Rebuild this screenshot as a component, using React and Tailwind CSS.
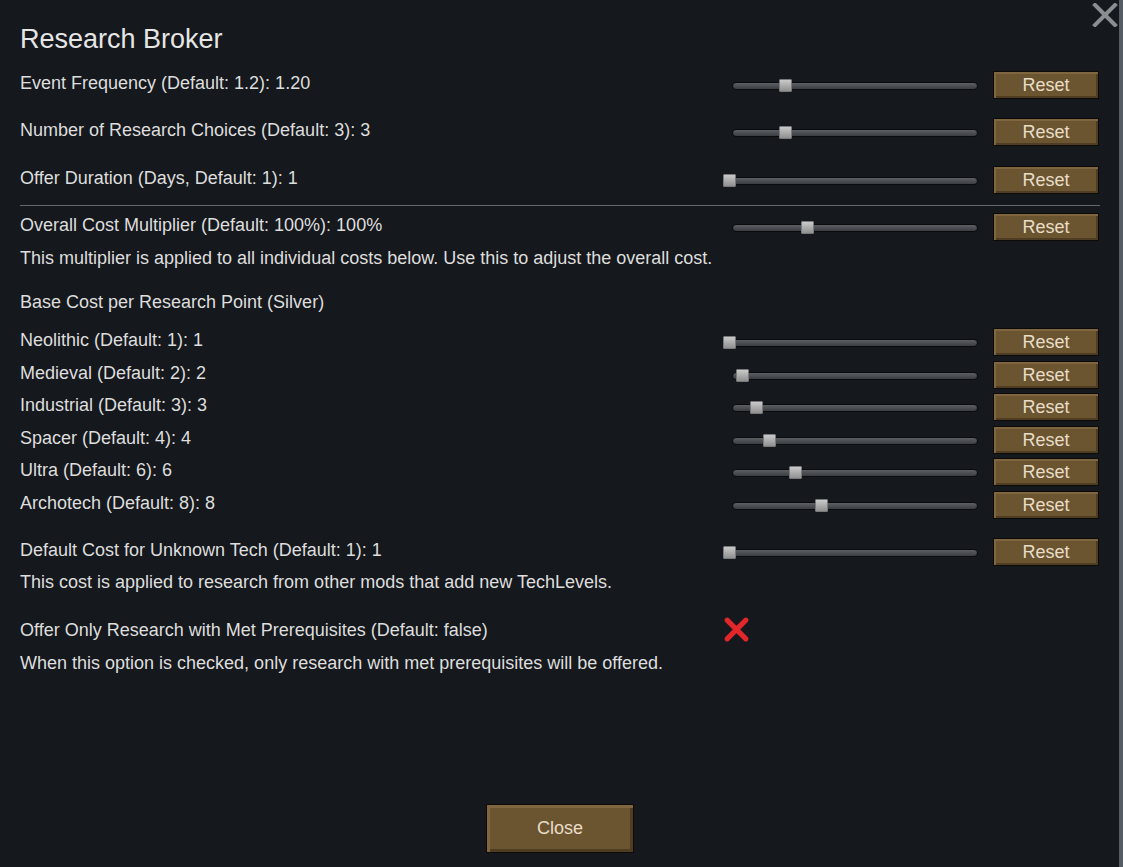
const font = { fontFamily: '"Liberation Sans", Arial, sans-serif' };

function Slider({ at }) {
    // at = thumb centre, in px from the slider's left edge
    return (
        <div className="relative w-[255px] h-[28px] pt-[2px] flex items-center pl-[9px] pr-0 shrink-0">
            <div className="flex-1 h-[8px] rounded-full border border-[#0a0b0d] bg-gradient-to-b from-[#5c5f63] to-[#3a3d41]" />
            <div
                className="absolute top-[8px] w-[13px] h-[13px] rounded-[1px] bg-gradient-to-b from-[#cacaca] to-[#909090] border border-[#77797b]"
                style={{ left: at - 6 }}
            />
        </div>
    );
}

function ResetButton() {
    return (
        <button className="w-[106px] h-[28px] shrink-0 border border-[#0c0b08] bg-[#6b5530] shadow-[inset_2px_2px_0_#7f6641,inset_-2px_-2px_0_#4e3d22] text-[#e8ddc8] text-[18px] leading-none">
            Reset
        </button>
    );
}

function SettingRow({ label, at, className = '' }) {
    return (
        <div className={`flex items-start ${className}`}>
            <div className="flex-1 leading-[24px]">{label}</div>
            <Slider at={at} />
            <div className="w-[15px]" />
            <ResetButton />
            <div className="w-px" />
        </div>
    );
}

const techs = [
    { label: 'Neolithic (Default: 1): 1', at: 6, mt: 'mt-[14px]' },
    { label: 'Medieval (Default: 2): 2', at: 19, mt: 'mt-[5px]' },
    { label: 'Industrial (Default: 3): 3', at: 33, mt: 'mt-[4px]' },
    { label: 'Spacer (Default: 4): 4', at: 46, mt: 'mt-[5px]' },
    { label: 'Ultra (Default: 6): 6', at: 72, mt: 'mt-[4px]' },
    { label: 'Archotech (Default: 8): 8', at: 98, mt: 'mt-[5px]' },
];

export default function App() {
    return (
        <div className="w-[1123px] h-[867px] flex bg-[#15181c] text-[#dedede] text-[18px] overflow-hidden" style={font}>
            <div className="relative flex-1 flex flex-col pl-[20px] pr-[19px] pt-[23px] pb-[14px]">
                <button className="absolute top-[3px] right-[1px] w-[26px] h-[24px]">
                    <svg viewBox="0 0 26 24" width="26" height="24">
                        <path d="M3 2 L23 22 M23 2 L3 22" stroke="#8b8e91" strokeWidth="4" strokeLinecap="square" />
                    </svg>
                </button>

                <h1 className="text-[27px] leading-[32px] text-[#e6e6e6]">Research Broker</h1>

                <SettingRow label="Event Frequency (Default: 1.2): 1.20" at={62} className="mt-[16px]" />
                <SettingRow label="Number of Research Choices (Default: 3): 3" at={62} className="mt-[19px]" />
                <SettingRow label="Offer Duration (Days, Default: 1): 1" at={6} className="mt-[20px]" />

                <div className="h-px bg-[#64686c] mt-[11px]" />

                <SettingRow label="Overall Cost Multiplier (Default: 100%): 100%" at={84} className="mt-[7px]" />
                <p className="leading-[24px] mt-[5px]">
                    This multiplier is applied to all individual costs below. Use this to adjust the overall cost.
                </p>

                <p className="leading-[24px] mt-[20px]">Base Cost per Research Point (Silver)</p>

                {techs.map((t) => (
                    <SettingRow key={t.label} label={t.label} at={t.at} className={t.mt} />
                ))}

                <SettingRow label="Default Cost for Unknown Tech (Default: 1): 1" at={6} className="mt-[19px]" />
                <p className="leading-[24px] mt-[4px]">
                    This cost is applied to research from other mods that add new TechLevels.
                </p>

                <div className="flex items-center mt-[22px]">
                    <div className="flex-1 leading-[24px]">Offer Only Research with Met Prerequisites (Default: false)</div>
                    <div className="w-[377px] shrink-0">
                        <svg viewBox="0 0 26 26" width="27" height="27">
                            <path d="M4 4 L22 22 M22 4 L4 22" stroke="#e3262a" strokeWidth="5" strokeLinecap="round" />
                        </svg>
                    </div>
                </div>
                <p className="leading-[24px] mt-[8px]">
                    When this option is checked, only research with met prerequisites will be offered.
                </p>

                <div className="mt-auto flex justify-center">
                    <button className="w-[148px] h-[49px] border border-[#0c0b08] bg-[#6b5530] shadow-[inset_3px_3px_0_#7f6641,inset_-3px_-3px_0_#4e3d22] text-[#e8ddc8] text-[18px]">
                        Close
                    </button>
                </div>
            </div>
            <div className="w-[4px] bg-[#555c64]" />
        </div>
    );
}
